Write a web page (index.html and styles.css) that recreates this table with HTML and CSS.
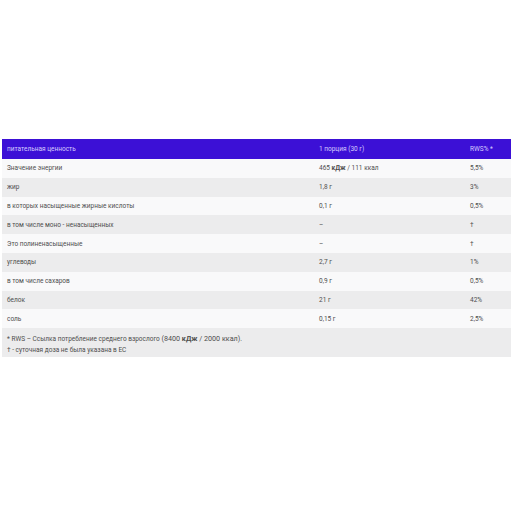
FILE: index.html
```html
<!DOCTYPE html>
<html lang="ru">
<head>
<meta charset="utf-8">
<link rel="stylesheet" href="styles.css">
</head>
<body>
<div class="page">
  <table class="nutr">
    <thead>
      <tr><th class="c1">питательная ценность</th><th class="c2">1 порция (30 г)</th><th class="c3">RWS% *</th></tr>
    </thead>
    <tbody>
      <tr><td>Значение энергии</td><td>465 <b>кДж</b> / 111 ккал</td><td>5,5%</td></tr>
      <tr><td>жир</td><td>1,8 г</td><td>3%</td></tr>
      <tr><td>в которых насыщенные жирные кислоты</td><td>0,1 г</td><td>0,5%</td></tr>
      <tr><td>в том числе моно - ненасыщенных</td><td>–</td><td>†</td></tr>
      <tr><td>Это полиненасыщенные</td><td>–</td><td>†</td></tr>
      <tr><td>углеводы</td><td>2,7 г</td><td>1%</td></tr>
      <tr><td>в том числе сахаров</td><td>0,9 г</td><td>0,5%</td></tr>
      <tr><td>белок</td><td>21 г</td><td>42%</td></tr>
      <tr><td>соль</td><td>0,15 г</td><td>2,5%</td></tr>
    </tbody>
  </table>
  <div class="foot">
    <p>* RWS – Ссылка потребление среднего взрослого <span class="big">(8400 <b>кДж</b> / 2000 ккал)</span>.</p>
    <p>† - суточная доза не была указана в ЕС</p>
  </div>
</div>
</body>
</html>
```
FILE: styles.css
```css
html, body { margin: 0; padding: 0; background: #ffffff; }
body { font-family: Roboto, "Noto Sans", sans-serif; color: #4e4e4e; }
.page { padding: 139px 1px 0 2px; }
.nutr { width: 100%; border-collapse: collapse; table-layout: fixed; font-size: 6.5px; }
.nutr th { background: #3c10d6; color: #d6ccff; font-weight: 400; text-align: left; height: 20px; padding: 0 0 0 5px; }
.nutr .c1 { width: 307px; }
.nutr .c2 { width: 146px; }
.nutr td { height: 18.8px; padding: 0 0 0 5px; }
.nutr tbody tr:nth-child(odd) td { background: #f9f9fa; }
.nutr tbody tr:nth-child(even) td { background: #ececed; }
.nutr b { font-weight: 700; }
.foot { background: #ececed; padding: 5px; font-size: 6.5px; height: 19px; }
.foot p { margin: 0; line-height: 11px; }
.foot .big { font-size: 7.2px; }
.foot b { font-weight: 700; }
```
